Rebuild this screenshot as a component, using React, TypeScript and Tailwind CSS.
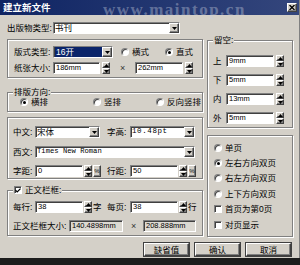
import type { ReactNode } from 'react'

// classic win2000 bevels
const sunk =
  'border border-t-[#808080] border-l-[#808080] border-b-white border-r-white shadow-[inset_1px_1px_0_#404040]'
const raised =
  'border border-t-white border-l-white border-b-[#404040] border-r-[#404040] shadow-[inset_-1px_-1px_0_#808080] bg-[#d4d0c8]'
const etched = 'relative border border-[#808080] shadow-[1px_1px_0_#fff,inset_1px_1px_0_#fff]'
const txt = 'text-[8.5px] leading-[10px] whitespace-nowrap'

function Up() {
  return (
    <svg width="5" height="3" viewBox="0 0 5 3">
      <path d="M2.5 0L5 3H0z" fill="#000" />
    </svg>
  )
}

function Down() {
  return (
    <svg width="5" height="3" viewBox="0 0 5 3">
      <path d="M0 0H5L2.5 3z" fill="#000" />
    </svg>
  )
}

function Spin({ className = '' }: { className?: string }) {
  return (
    <div className={`flex h-[12px] w-[8px] flex-col ${className}`}>
      <div className={`${raised} flex flex-1 items-center justify-center`}>
        <Up />
      </div>
      <div className={`${raised} flex flex-1 items-center justify-center`}>
        <Down />
      </div>
    </div>
  )
}

function Field({ className = '', children, gray }: { className?: string; children?: ReactNode; gray?: boolean }) {
  return (
    <div
      className={`${sunk} flex h-[12px] items-center overflow-hidden px-[2px] text-[7.5px] leading-none ${
        gray ? 'bg-[#dcd9d2]' : 'bg-white'
      } ${className}`}
    >
      {children}
    </div>
  )
}

function Select({ className = '', children }: { className?: string; children?: ReactNode }) {
  return (
    <div className={`${sunk} flex h-[12px] items-center bg-white ${className}`}>
      <div className="flex h-full min-w-0 flex-1 items-center overflow-hidden pl-[1px]">{children}</div>
      <div className={`${raised} flex h-full w-[10px] items-center justify-center`}>
        <Down />
      </div>
    </div>
  )
}

function Radio({ on, label, className = '' }: { on?: boolean; label: string; className?: string }) {
  return (
    <div className={`flex items-center gap-[3px] ${className}`}>
      <span
        className={`${sunk} flex h-[8px] w-[8px] items-center justify-center rounded-full bg-white`}
      >
        {on && <span className="h-[3px] w-[3px] rounded-full bg-black" />}
      </span>
      <span className={txt}>{label}</span>
    </div>
  )
}

function Check({ on, label }: { on?: boolean; label: string }) {
  return (
    <div className="flex items-center gap-[3px]">
      <span className={`${sunk} flex h-[8px] w-[8px] items-center justify-center bg-white`}>
        {on && (
          <svg width="6" height="5" viewBox="0 0 6 5">
            <path d="M0.5 2.2L2.2 4L5.5 0.6" stroke="#000" strokeWidth="1.2" fill="none" />
          </svg>
        )}
      </span>
      <span className={txt}>{label}</span>
    </div>
  )
}

function Pct() {
  return (
    <div className={`${raised} ml-[1px] flex h-[12px] w-[8px] items-center justify-center text-[6px] leading-none`}>
      %
    </div>
  )
}

function Legend({ children }: { children: ReactNode }) {
  return (
    <div className={`absolute -top-[6px] left-[5px] bg-[#d4d0c8] px-[1px] ${txt}`}>{children}</div>
  )
}

function Btn({ children }: { children: ReactNode }) {
  return (
    <div className={`${raised} flex h-[13px] w-[45px] items-center justify-center outline outline-1 outline-[#404040] ${txt}`}>
      {children}
    </div>
  )
}

function TitleBar() {
  return (
    <div className="relative flex h-[15px] shrink-0 items-center bg-gradient-to-r from-[#0f2463] to-[#34467c] pl-[3px] pr-[2px]">
      <span className="text-[9.5px] font-bold leading-none text-white">建立新文件</span>
      <span className="pointer-events-none absolute left-[103px] top-[1px] z-10 font-['Liberation_Serif',serif] text-[17px] font-bold leading-none tracking-[1.5px] text-[#c8d0e0]/40">
        www.maintop.cn
      </span>
      <div className={`${raised} ml-auto flex h-[9px] w-[10px] items-center justify-center`}>
        <svg width="6" height="5" viewBox="0 0 6 5">
          <path d="M0.5 0L5.5 5M5.5 0L0.5 5" stroke="#000" strokeWidth="1.3" />
        </svg>
      </div>
    </div>
  )
}

export default function App() {
  return (
    <div className="flex h-[265px] w-[300px] flex-col bg-[#1c1c1c] font-['Liberation_Sans','Noto_Sans_CJK_SC',sans-serif] text-black">
      <div className="flex h-[258px] flex-col border-r border-r-[#808080] bg-[#d4d0c8]">
        <TitleBar />

        <div className="flex pl-[7px]">
          {/* left column */}
          <div className="flex w-[196px] flex-col">
            <div className="mt-[7px] flex h-[12px] items-center">
              <span className={`w-[46px] ${txt}`}>出版物类型:</span>
              <Select className="w-[127px]">
                <span className={txt}>书刊</span>
              </Select>
            </div>

            <div className={`${etched} mt-[5px] flex h-[39px] flex-col gap-[4px] pl-[6px] pt-[6px]`}>
              <div className="flex h-[12px] items-center">
                <span className={`w-[39px] ${txt}`}>版式类型:</span>
                <Select className="w-[60px]">
                  <span className={`flex h-full w-full items-center bg-[#0a246a] pl-[1px] text-white ${txt}`}>16开</span>
                </Select>
                <Radio label="横式" className="ml-[8px]" />
                <Radio on label="直式" className="ml-[16px]" />
              </div>
              <div className="flex h-[12px] items-center">
                <span className={`w-[39px] ${txt}`}>纸张大小:</span>
                <Field className="w-[47px]">186mm</Field>
                <Spin className="ml-[2px]" />
                <span className="ml-[10px] w-[6px] text-[9px] leading-none text-[#333]">×</span>
                <Field className="ml-[9px] w-[48px]">262mm</Field>
                <Spin className="ml-[2px]" />
              </div>
            </div>

            <div className={`${etched} mt-[14px] flex h-[20px] items-center pl-[12px]`}>
              <Legend>排版方向:</Legend>
              <Radio on label="横排" />
              <Radio label="竖排" className="ml-[45px]" />
              <Radio label="反向竖排" className="ml-[35px]" />
            </div>

            <div className={`${etched} mt-[5px] flex h-[62px] flex-col pl-[5px] pt-[8px]`}>
              <div className="flex h-[12px] items-center">
                <span className={`w-[22px] ${txt}`}>中文:</span>
                <Select className="w-[65px]">
                  <span className={txt}>宋体</span>
                </Select>
                <span className={`ml-[7px] w-[23px] ${txt}`}>字高:</span>
                <Select className="w-[65px]">
                  <span className="font-['Liberation_Mono',monospace] text-[7.5px] leading-none tracking-[0.6px]">10.48pt</span>
                </Select>
              </div>
              <div className="mt-[8px] flex h-[12px] items-center">
                <span className={`w-[22px] ${txt}`}>西文:</span>
                <Select className="w-[160px]">
                  <span className="font-['Liberation_Mono',monospace] text-[7.2px] leading-none">Times New Roman</span>
                </Select>
              </div>
              <div className="mt-[7px] flex h-[12px] items-center">
                <span className={`w-[22px] ${txt}`}>字距:</span>
                <Field className="w-[48px]">0</Field>
                <Spin className="ml-[1px]" />
                <Pct />
                <span className={`ml-[6px] w-[23px] ${txt}`}>行距:</span>
                <Field className="w-[48px]">50</Field>
                <Spin className="ml-[1px]" />
                <Pct />
              </div>
            </div>

            <div className={`${etched} mt-[11px] flex h-[46px] flex-col pl-[5px] pt-[10px]`}>
              <div className="absolute -top-[6px] left-[5px] bg-[#d4d0c8] px-[1px]">
                <Check on label="正文栏框:" />
              </div>
              <div className="flex h-[12px] items-center">
                <span className={`w-[22px] ${txt}`}>每行:</span>
                <Field className="w-[48px]">38</Field>
                <Spin className="ml-[1px]" />
                <span className={`ml-[1px] w-[9px] ${txt}`}>字</span>
                <span className={`ml-[5px] w-[23px] ${txt}`}>每页:</span>
                <Field className="w-[48px]">38</Field>
                <Spin className="ml-[1px]" />
                <span className={`ml-[1px] ${txt}`}>行</span>
              </div>
              <div className="mt-[7px] flex h-[12px] items-center">
                <span className={`w-[56px] ${txt}`}>正文栏框大小:</span>
                <Field gray className="w-[54px]">
                  140.4898mm
                </Field>
                <span className="ml-[8px] w-[6px] text-[9px] leading-none text-[#333]">×</span>
                <Field gray className="ml-[6px] w-[53px]">
                  208.888mm
                </Field>
              </div>
            </div>
          </div>

          {/* right column */}
          <div className="ml-[4px] flex w-[86px] flex-col">
            <div className={`${etched} mt-[25px] flex h-[88px] flex-col gap-[7px] pl-[5px] pt-[14px]`}>
              <Legend>留空:</Legend>
              {[
                ['上', '9mm'],
                ['下', '5mm'],
                ['内', '13mm'],
                ['外', '5mm'],
              ].map(([k, v]) => (
                <div key={k} className="flex h-[12px] items-center">
                  <span className={`w-[13px] ${txt}`}>{k}</span>
                  <Field className="w-[48px]">{v}</Field>
                  <Spin className="ml-[2px]" />
                </div>
              ))}
            </div>

            <div className={`${etched} mt-[7px] flex h-[102px] flex-col pl-[6px] pt-[4px]`}>
              <div className="flex h-[15.4px] items-center">
                <Radio label="单页" />
              </div>
              <div className="flex h-[15.4px] items-center">
                <Radio on label="左右方向双页" />
              </div>
              <div className="flex h-[15.4px] items-center">
                <Radio label="右左方向双页" />
              </div>
              <div className="flex h-[15.4px] items-center">
                <Radio label="上下方向双页" />
              </div>
              <div className="flex h-[15.4px] items-center">
                <Check label="首页为第0页" />
              </div>
              <div className="flex h-[15.4px] items-center">
                <Check label="对页显示" />
              </div>
            </div>
          </div>
        </div>

        <div className="mt-[6px] flex justify-end gap-[6px] pr-[8px]">
          <Btn>缺省值</Btn>
          <Btn>确认</Btn>
          <Btn>取消</Btn>
        </div>
      </div>
    </div>
  )
}
